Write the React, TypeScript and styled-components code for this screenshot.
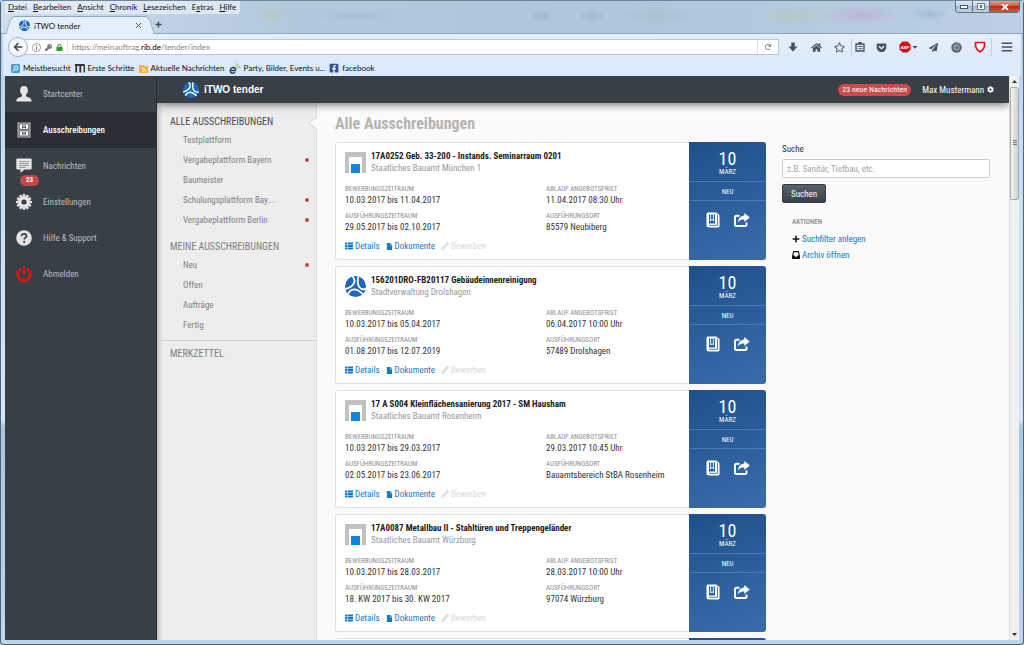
import React from 'react';
import styled, { createGlobalStyle, css } from 'styled-components';
import {
  FaArrowLeft, FaHome, FaRegStar, FaPaperPlane, FaGetPocket, FaBars, FaLock,
  FaCog, FaPlus, FaFile, FaPencilAlt, FaThList, FaCaretDown, FaFacebookSquare, FaRedo, FaKey,
} from 'react-icons/fa';

const condensed = '"Roboto Condensed", Roboto, sans-serif';
const chromeFont = 'Lato, "Open Sans", sans-serif';

const GlobalStyle = createGlobalStyle`
  * { box-sizing: border-box; }
  body { margin: 0; background: #b9d3ee; font-family: ${condensed}; font-size: 9px; color: #333; }
  a { color: inherit; text-decoration: none; }
  ul, ol, dl, dd, h1, h2, h3, p { margin: 0; padding: 0; }
  ul { list-style: none; }
  button, input { font: inherit; }
  svg { display: block; flex: none; }
`;

/* ---------- browser window ---------- */

const Window = styled.div`
  display: flex;
  flex-direction: column;
  height: 100vh;
  padding: 0 4px 4px;
  border: 1px solid #4d6478;
  border-top-color: #6d8797;
  border-radius: 4px;
  background: linear-gradient(#aec4da, #c4dcf4 120px, #d4e6f8 420px, #a9c6e2 425px, #bcd6f0);
`;

const TitleBar = styled.header`
  position: relative;
  display: flex;
  flex-direction: column;
  justify-content: space-between;
  flex: none;
  height: 33px;
  margin: 0 -4px;
  padding-left: 4px;
  background:
    radial-gradient(ellipse 14px 7px at 540px 15px, #8fa8c188, transparent),
    radial-gradient(ellipse 14px 8px at 271px 14px, #b9c48f66, transparent),
    radial-gradient(ellipse 40px 5px at 355px 15px, #96aec877, transparent),
    radial-gradient(ellipse 14px 7px at 591px 15px, #8fa8c177, transparent),
    radial-gradient(ellipse 40px 10px at 655px 15px, #9dbcc677, transparent),
    radial-gradient(ellipse 40px 10px at 795px 15px, #b8c8a877, transparent),
    radial-gradient(ellipse 40px 10px at 860px 14px, #c49ac477, transparent),
    radial-gradient(ellipse 20px 7px at 928px 13px, #8ba4c877, transparent),
    linear-gradient(90deg, #cfdeec, #b3c8dc 300px, #b0c6dc 60%, #bccfe4);
  border-bottom: 1px solid #8ea6bf;
`;

const MenuBar = styled.nav`
  display: flex;
  gap: 6px;
  align-self: flex-start;
  height: 13px;
  padding: 0 4px 0 3px;
  border-radius: 0 0 3px 0;
  background: #e6eef6cc;
  font: 8px/12px ${chromeFont};
  color: #111;
`;

const TabStrip = styled.div`
  position: relative;
  z-index: 0;
  display: flex;
  align-items: center;
  gap: 8px;
`;

const Tab = styled.div`
  position: relative;
  display: flex;
  align-items: center;
  gap: 4px;
  width: 134px;
  height: 18px;
  margin: 0 0 -1px 8px;
  padding: 0 6px;
  border-top: 1px solid #8ea6bf;
  background: #e3effb;
  font: 8px/16px ${chromeFont};
  color: #111;
  &::before, &::after {
    content: '';
    position: absolute;
    z-index: -1;
    top: -1px;
    bottom: 0;
    width: 12px;
    background: #e3effb;
    border: 1px solid #8ea6bf;
    border-bottom: 0;
  }
  &::before { left: -5px; border-right: 0; border-radius: 6px 0 0 0; transform: skewX(-16deg); }
  &::after { right: -5px; border-left: 0; border-radius: 0 6px 0 0; transform: skewX(16deg); }
`;

const PlainButton = styled.button`
  display: flex;
  align-items: center;
  justify-content: center;
  padding: 0;
  border: 0;
  background: none;
  color: #3c4650;
`;

const TabTitle = styled.span`
  flex: 1;
`;

const WindowButtons = styled.div`
  position: absolute;
  top: 0;
  right: 3px;
  display: flex;
  border: 1px solid #5d7084;
  border-top: 0;
  border-radius: 0 0 4px 4px;
  overflow: hidden;
`;

const WindowButton = styled.button<{ $close?: boolean }>`
  display: flex;
  align-items: center;
  justify-content: center;
  width: ${p => (p.$close ? 29 : 17)}px;
  height: 11px;
  padding: 0;
  border: 0;
  border-right: ${p => (p.$close ? 0 : 1)}px solid #5d7084;
  background: ${p => (p.$close
    ? 'linear-gradient(#e0a193, #cf5a42 45%, #b92d12 50%, #d0573a)'
    : 'linear-gradient(#dfe9f3, #c3d2e2 45%, #a5b9cd 50%, #c0d2e4)')};
`;

const NavBar = styled.div`
  display: flex;
  align-items: center;
  flex: none;
  height: 26px;
  margin: 0 -2px;
  padding-left: 5px;
  background: linear-gradient(#e5f0fc, #dce9f8);
`;

const BackButton = styled(PlainButton)`
  position: relative;
  z-index: 1;
  flex: none;
  width: 20px;
  height: 20px;
  margin-right: -6px;
  border: 1px solid #9fb0c2;
  border-radius: 50%;
  background: #f4f8fc;
`;

const AddressBar = styled.div`
  display: flex;
  align-items: center;
  gap: 4px;
  flex: 1;
  height: 16px;
  padding-left: 9px;
  border: 1px solid #b9c8d8;
  background: #fff;
  color: #777;
`;

const Address = styled.span`
  flex: 1;
  padding-left: 4px;
  border-left: 1px solid #e4e4e4;
  font: 8px/12px ${chromeFont};
  color: #858585;
  b { font-weight: 400; color: #000; }
`;

const Reload = styled(PlainButton)`
  width: 21px;
  height: 14px;
  border-left: 1px solid #dde4ea;
  color: #777;
`;

const ToolButton = styled(PlainButton)<{ $w?: number; $line?: boolean }>`
  flex: none;
  width: ${p => p.$w ?? 23}px;
  height: 18px;
  border-left: ${p => (p.$line ? '1px solid #c3d0dd' : 0)};
  color: #46525e;
`;

const Bookmarks = styled.nav`
  display: flex;
  align-items: center;
  gap: 4px;
  flex: none;
  height: 16px;
  margin: 0 -2px;
  padding-left: 8px;
  background: #dbe9f8;
  font: 8px/14px ${chromeFont};
  color: #111;
`;

const Bookmark = styled.a`
  display: flex;
  align-items: center;
  gap: 3px;
`;

/* ---------- web page ---------- */

const Viewport = styled.div`
  display: flex;
  flex: 1;
  min-height: 0;
  background: #fafafa;
  overflow: hidden;
`;

const Sidebar = styled.nav`
  flex: none;
  width: 152px;
  background: #383f46;
  box-shadow: inset -1px 0 #262c32;
`;

const SideLink = styled.a<{ $active?: boolean }>`
  position: relative;
  display: flex;
  align-items: center;
  gap: 11px;
  height: 36px;
  padding-left: 11px;
  font-size: 9px;
  color: #b9bdc0;
  ${p => p.$active && css`
    background: #2b3038;
    color: #fff;
    font-weight: 500;
  `}
`;

const Count = styled.span`
  position: absolute;
  z-index: 1;
  left: 15px;
  top: 27px;
  width: 19px;
  height: 11px;
  border-radius: 6px;
  background: #c2464a;
  color: #fff;
  font-size: 7px;
  font-weight: 700;
  line-height: 11px;
  text-align: center;
`;

const Main = styled.div`
  display: flex;
  flex-direction: column;
  flex: 1;
  min-width: 0;
`;

const AppBar = styled.header`
  position: relative;
  z-index: 1;
  display: flex;
  align-items: center;
  flex: none;
  height: 27px;
  padding: 0 15px 0 26px;
  background: #383f46;
  color: #fff;
  box-shadow: 0 1px 10px rgba(0, 0, 0, 0.6);
  clip-path: inset(0 0 -16px 0);
`;

const Brand = styled.a`
  display: flex;
  align-items: center;
  gap: 5px;
  flex: 1;
  font: 700 10px/16px "Liberation Sans", sans-serif;
`;

const Pill = styled.a`
  margin-right: 11px;
  padding: 0 4px;
  border-radius: 6px;
  background: #c84b4e;
  font-size: 8px;
  line-height: 12px;
`;

const UserButton = styled(PlainButton)`
  gap: 3px;
  color: #fff;
`;

const Columns = styled.div`
  display: flex;
  flex: 1;
  min-height: 0;
`;

const SubNav = styled.nav`
  flex: none;
  width: 160px;
  padding-top: 11px;
  border-right: 1px solid #dcdcdc;
  background: linear-gradient(90deg, #c4c4c4, #ededed 6px);
  color: #808080;
`;

const SubHeading = styled.h2<{ $active?: boolean }>`
  position: relative;
  padding-left: 13px;
  font-size: 10px;
  font-weight: 400;
  line-height: 16px;
  color: ${p => (p.$active ? '#4a4a4a' : '#808080')};
`;

const Notch = styled.svg`
  position: absolute;
  right: -1px;
  top: 2px;
`;

const SubList = styled.ul`
  margin-bottom: 9px;
`;

const SubItem = styled.li`
  display: flex;
  align-items: center;
  justify-content: space-between;
  height: 20px;
  padding: 0 7px 0 26px;
`;

const Dot = styled.i`
  width: 4px;
  height: 4px;
  border-radius: 50%;
  background: #c0484a;
`;

const SubFooter = styled.div`
  margin: -4px 0 0 4px;
  padding-top: 5px;
  border-top: 1px solid #d2d2d2;
  ${SubHeading} { padding-left: 9px; }
`;

const Content = styled.main`
  display: grid;
  grid-template-columns: minmax(0, 431fr) minmax(0, 208fr);
  gap: 16px;
  flex: 1;
  align-content: start;
  padding: 12px 19px 0 18px;
  overflow: hidden;
`;

const PageTitle = styled.h1`
  margin-bottom: 9px;
  font-size: 16px;
  line-height: 18px;
  font-weight: 700;
  color: #b4b4b4;
`;

const Card = styled.article`
  display: flex;
  height: 118px;
  margin-bottom: 6px;
  border: 1px solid #e0e0e0;
  border-right: 0;
  border-radius: 3px;
  background: #fff;
`;

const CardBody = styled.div`
  flex: 1;
  min-width: 0;
  padding: 8px 9px 0;
`;

const CardHead = styled.div`
  display: flex;
  align-items: center;
  gap: 5px;
  height: 23px;
  margin-bottom: 11px;
`;

const CardTitle = styled.h3`
  font-size: 9px;
  line-height: 12px;
  font-weight: 700;
  color: #222;
`;

const Office = styled.p`
  line-height: 13px;
  color: #999;
`;

const Facts = styled.dl`
  display: grid;
  grid-template-columns: 3fr 2fr;
  row-gap: 6px;
  dt { font-size: 7px; line-height: 9px; color: #8f8f8f; text-transform: uppercase; white-space: nowrap; }
  dd { line-height: 12px; color: #333; white-space: nowrap; }
`;

const CardLinks = styled.div`
  display: flex;
  gap: 6px;
  margin-top: 7px;
`;

const CardLink = styled.a<{ $off?: boolean }>`
  display: flex;
  align-items: center;
  gap: 2px;
  line-height: 12px;
  color: ${p => (p.$off ? '#d9d9d9' : '#1279c8')};
`;

const DatePanel = styled.aside`
  flex: none;
  width: 77px;
  margin: -1px 0;
  border-radius: 0 3px 3px 0;
  background: linear-gradient(160deg, #1f508c, #3a6cac);
  color: #fff;
  text-align: center;
`;

const DateBox = styled.div`
  height: 39px;
  padding-top: 8px;
  font-size: 7px;
  line-height: 8px;
`;

const Day = styled.div`
  font-size: 18px;
  line-height: 18px;
`;

const State = styled.div`
  height: 20px;
  border: solid #4c79b3;
  border-width: 1px 0;
  font-size: 7px;
  line-height: 20px;
`;

const PanelActions = styled.div`
  display: flex;
  justify-content: center;
  gap: 14px;
  padding-top: 11px;
`;

const Aside = styled.aside`
  padding-top: 28px;
`;

const SearchForm = styled.form`
  display: flex;
  flex-direction: column;
  align-items: flex-start;
  label { line-height: 12px; margin: 0 0 4px; }
`;

const SearchInput = styled.input`
  width: 100%;
  height: 19px;
  padding: 0 4px;
  border: 1px solid #ccc;
  border-radius: 2px;
  background: #fff;
  &::placeholder { color: #a5a5a5; opacity: 1; }
`;

const SearchButton = styled.button`
  height: 19px;
  margin-top: 6px;
  padding: 0 8px;
  border: 1px solid #32383e;
  border-radius: 2px;
  background: linear-gradient(#5a646d, #383f46);
  color: #fff;
`;

const Actions = styled.div`
  padding: 14px 0 0 10px;
`;

const ActionsTitle = styled.h2`
  margin-bottom: 4px;
  font-size: 7px;
  line-height: 10px;
  font-weight: 700;
  color: #999;
`;

const ActionLink = styled.a`
  display: flex;
  align-items: center;
  gap: 2px;
  height: 16px;
  color: #1279c8;
  svg { color: #111; }
`;

const ScrollTrack = styled.div`
  display: flex;
  flex-direction: column;
  flex: none;
  width: 10px;
  border-left: 1px solid #ddd;
  background: #f0f0f0;
`;

const ScrollArrow = styled.span<{ $down?: boolean }>`
  display: flex;
  align-items: center;
  justify-content: center;
  height: 11px;
  margin-top: ${p => (p.$down ? 'auto' : 0)};
  svg { transform: ${p => (p.$down ? 'rotate(180deg)' : 'none')}; }
`;

const ScrollThumb = styled.span`
  display: flex;
  align-items: center;
  justify-content: center;
  height: 20%;
  border: 1px solid #a9a9a9;
  border-radius: 2px;
  background: linear-gradient(90deg, #f5f5f5, #d0d0d4);
`;

/* ---------- drawings ---------- */

const RibLogo = ({ size }: { size: number }) => (
  <svg width={size} height={size} viewBox="0 0 24 24" aria-hidden="true">
    <circle cx="12" cy="12" r="12" fill="#1f68b8" />
    <g fill="none" stroke="#fff" strokeWidth="2">
      {[0, 120, 240].map(a => (
        <path key={a} d="M8.500 .3C13 5 11.500 11.500 .3 15" transform={`rotate(${a} 12 12)`} />
      ))}
    </g>
  </svg>
);

const BauamtLogo = () => (
  <svg width="21" height="21" viewBox="0 0 21 21" aria-hidden="true">
    <path d="M0 0H21V21H17V5H4V21H0Z" fill="#c2c2c2" />
    <rect x="6" y="12" width="9" height="9" fill="#0f86dc" />
  </svg>
);

const BookIcon = () => (
  <svg width="14" height="16" viewBox="0 0 14 16" aria-hidden="true">
    <path d="M2 .5H10Q11.500 .5 11.500 2H12Q13.500 2 13.500 3.500V14Q13.500 15.500 12 15.500H3Q.5 15.500 .5 13V2Q.5 .5 2 .5Z" fill="#fff" />
    <path d="M3 2.200H9V11.500H3Z" fill="#2c5e9e" />
    <path d="M4.600 2.200H7.400V9L6 7.700L4.600 9Z" fill="#2c5e9e" stroke="#fff" strokeWidth=".9" />
    <path d="M11.500 3V13.300H3" fill="none" stroke="#2c5e9e" strokeWidth=".8" />
  </svg>
);

const ShareIcon = () => (
  <svg width="16" height="14" viewBox="0 0 16 14" aria-hidden="true">
    <path d="M5.500 2.700H2.500Q1 2.700 1 4.200V11.500Q1 13 2.500 13H11Q12.500 13 12.500 11.500V9.500" fill="none" stroke="#fff" strokeWidth="2" />
    <path d="M10.300 0L15.800 4.600L10.300 9V6.500C7.500 6.300 5.500 7 3.800 9.500C4.200 5.500 6.500 2.900 10.300 2.600Z" fill="#fff" />
  </svg>
);

const TrayIcon = () => (
  <svg width="8" height="8" viewBox="0 0 8 8" aria-hidden="true">
    <path fillRule="evenodd" fill="#111" d="M1.200 0H6.800L8 5V8H0V5ZM1.900 1.200L1.300 4.600H2.600L3.200 5.800H4.800L5.400 4.600H6.700L6.100 1.200Z" />
  </svg>
);

const SideSvg = ({ children }: { children: React.ReactNode }) => (
  <svg width="16" height="16" viewBox="0 0 16 16" fill="#e4e4e4" aria-hidden="true">{children}</svg>
);

const PersonIcon = () => (
  <SideSvg>
    <path d="M8 0C10.500 0 11.900 1.600 11.900 4.200C11.900 6.300 11.200 7.600 10.100 8.600V10.500C12.500 11.400 15.700 12 15.700 15.500H.3C.3 12 3.500 11.400 5.900 10.500V8.600C4.800 7.600 4.100 6.300 4.100 4.200C4.100 1.600 5.500 0 8 0Z" />
  </SideSvg>
);

const CabinetIcon = () => (
  <SideSvg>
    <path d="M1.500 .5H14.500V15.500H1.500Z" fill="#b8b8b8" />
    <path d="M3.200 2H12.800V7.200H3.200ZM3.200 8.800H12.800V14H3.200Z" fill="#fff" stroke="#3a3f47" strokeWidth=".8" />
    <path d="M6 3.500H10V5.800H6ZM6 10.300H10V12.600H6Z" fill="#3a3f47" />
    <path d="M7.200 4H8.800V4.900H7.200ZM7.200 10.800H8.800V11.700H7.200Z" fill="#fff" />
  </SideSvg>
);

const MessageIcon = () => (
  <SideSvg>
    <path d="M1.500 .5H14.500Q15.700 .5 15.700 1.700V10.200Q15.700 11.400 14.500 11.400H8.500L4.500 15V11.400H1.500Q.3 11.400 .3 10.200V1.700Q.3 .5 1.500 .5Z" />
    <path d="M3 3.500H13M3 5.500H13M3 7.500H13M3 9.500H10" stroke="#8d9094" strokeWidth=".9" />
  </SideSvg>
);

const GearIcon = () => (
  <SideSvg>
    {[0, 30, 60, 90, 120, 150].map(a => (
      <rect key={a} x="6.700" y="0" width="2.600" height="16" rx=".8" transform={`rotate(${a} 8 8)`} />
    ))}
    <circle cx="8" cy="8" r="6" />
    <circle cx="8" cy="8" r="2.600" fill="#383f46" />
  </SideSvg>
);

const HelpIcon = () => (
  <SideSvg>
    <circle cx="8" cy="8" r="7.800" />
    <path d="M5.600 6.200C5.600 4.500 6.600 3.800 8 3.800C9.500 3.800 10.500 4.600 10.500 5.900C10.500 7.600 8.200 7.700 8.200 9.600" fill="none" stroke="#383f46" strokeWidth="1.700" />
    <circle cx="8.200" cy="11.900" r="1.100" fill="#383f46" />
  </SideSvg>
);

const PowerIcon = () => (
  <SideSvg>
    <path d="M4 3.600A6.300 6.300 0 1 0 12 3.600" fill="none" stroke="#cf1717" strokeWidth="2.900" strokeLinecap="round" />
    <path d="M8 1.400V7.500" stroke="#cf1717" strokeWidth="2.700" strokeLinecap="round" />
  </SideSvg>
);

/* ---------- data ---------- */

const menus: [string, string, string][] = [
  ['', 'D', 'atei'], ['', 'B', 'earbeiten'], ['', 'A', 'nsicht'], ['', 'C', 'hronik'],
  ['', 'L', 'esezeichen'], ['E', 'x', 'tras'], ['', 'H', 'ilfe'],
];

const sideLinks = [
  { label: 'Startcenter', icon: <PersonIcon /> },
  { label: 'Ausschreibungen', icon: <CabinetIcon />, active: true },
  { label: 'Nachrichten', icon: <MessageIcon />, count: 23 },
  { label: 'Einstellungen', icon: <GearIcon /> },
  { label: 'Hilfe & Support', icon: <HelpIcon /> },
  { label: 'Abmelden', icon: <PowerIcon /> },
];

const platforms: [string, boolean][] = [
  ['Testplattform', false], ['Vergabeplattform Bayern', true], ['Baumeister', false],
  ['Schulungsplattform Bay...', true], ['Vergabeplattform Berlin', true],
];
const own: [string, boolean][] = [['Neu', true], ['Offen', false], ['Aufträge', false], ['Fertig', false]];

const tenders = [
  { title: '17A0252 Geb. 33-200 - Instands. Seminarraum 0201', office: 'Staatliches Bauamt München 1', apply: '10.03.2017 bis 11.04.2017', due: '11.04.2017 08:30 Uhr', run: '29.05.2017 bis 02.10.2017', place: '85579 Neubiberg' },
  { title: '156201DRO-FB20117 Gebäudeinnenreinigung', office: 'Stadtverwaltung Drolshagen', apply: '10.03.2017 bis 05.04.2017', due: '06.04.2017 10:00 Uhr', run: '01.08.2017 bis 12.07.2019', place: '57489 Drolshagen', rib: true },
  { title: '17 A S004 Kleinflächensanierung 2017 - SM Hausham', office: 'Staatliches Bauamt Rosenheim', apply: '10.03.2017 bis 29.03.2017', due: '29.03.2017 10:45 Uhr', run: '02.05.2017 bis 23.06.2017', place: 'Bauamtsbereich StBA Rosenheim' },
  { title: '17A0087 Metallbau II - Stahltüren und Treppengeländer', office: 'Staatliches Bauamt Würzburg', apply: '10.03.2017 bis 28.03.2017', due: '28.03.2017 10:00 Uhr', run: '18. KW 2017 bis 30. KW 2017', place: '97074 Würzburg' },
];

const SubLinks = ({ items }: { items: [string, boolean][] }) => (
  <SubList>
    {items.map(([label, dot]) => (
      <SubItem key={label}><a href="#">{label}</a>{dot && <Dot />}</SubItem>
    ))}
  </SubList>
);

const TenderCard = ({ t }: { t: (typeof tenders)[number] }) => (
  <Card>
    <CardBody>
      <CardHead>
        {t.rib ? <RibLogo size={21} /> : <BauamtLogo />}
        <div>
          <CardTitle>{t.title}</CardTitle>
          <Office>{t.office}</Office>
        </div>
      </CardHead>
      <Facts>
        <div><dt>Bewerbungszeitraum</dt><dd>{t.apply}</dd></div>
        <div><dt>Ablauf Angebotsfrist</dt><dd>{t.due}</dd></div>
        <div><dt>Ausführungszeitraum</dt><dd>{t.run}</dd></div>
        <div><dt>Ausführungsort</dt><dd>{t.place}</dd></div>
      </Facts>
      <CardLinks>
        <CardLink href="#"><FaThList size={8} />Details</CardLink>
        <CardLink href="#"><FaFile size={7} />Dokumente</CardLink>
        <CardLink $off aria-disabled="true"><FaPencilAlt size={8} />Bewerben</CardLink>
      </CardLinks>
    </CardBody>
    <DatePanel>
      <DateBox><Day>10</Day>MÄRZ</DateBox>
      <State>NEU</State>
      <PanelActions>
        <PlainButton aria-label="Merken"><BookIcon /></PlainButton>
        <PlainButton aria-label="Teilen"><ShareIcon /></PlainButton>
      </PanelActions>
    </DatePanel>
  </Card>
);

export default function App() {
  return (
    <Window>
      <GlobalStyle />
      <TitleBar>
        <MenuBar>
          {menus.map(([pre, key, rest]) => <a href="#" key={rest}>{pre}<u>{key}</u>{rest}</a>)}
        </MenuBar>
        <TabStrip>
          <Tab>
            <RibLogo size={11} />
            <TabTitle>iTWO tender</TabTitle>
            <PlainButton aria-label="Tab schließen">
              <svg width="5" height="5" viewBox="0 0 5 5"><path d="M0 0L5 5M5 0L0 5" stroke="#555" /></svg>
            </PlainButton>
          </Tab>
          <PlainButton aria-label="Neuer Tab"><FaPlus size={7} /></PlainButton>
        </TabStrip>
        <WindowButtons>
          <WindowButton aria-label="Minimieren">
            <svg width="8" height="4" viewBox="0 0 8 4"><rect x=".5" y=".5" width="7" height="3" fill="#fff" stroke="#4b5a6a" /></svg>
          </WindowButton>
          <WindowButton aria-label="Maximieren">
            <svg width="8" height="7" viewBox="0 0 8 7"><path d="M.5 .5H7.500V6.500H.5ZM3 2.500V4.500H5V2.500Z" fill="#fff" fillRule="evenodd" stroke="#4b5a6a" strokeWidth=".8" /></svg>
          </WindowButton>
          <WindowButton $close aria-label="Schließen">
            <svg width="8" height="6" viewBox="0 0 8 6"><path d="M1 0L7 6M7 0L1 6" stroke="#fff" strokeWidth="1.800" /></svg>
          </WindowButton>
        </WindowButtons>
      </TitleBar>

      <NavBar>
        <BackButton aria-label="Zurück"><FaArrowLeft size={10} /></BackButton>
        <AddressBar>
          <svg width="9" height="9" viewBox="0 0 9 9"><circle cx="4.500" cy="4.500" r="4" fill="none" stroke="#888" strokeWidth=".8" /><path d="M4.500 2V3M4.500 4V7" stroke="#777" /></svg>
          <FaKey size={7} />
          <FaLock size={7} color="#2f9a27" />
          <Address>https://meinauftrag.<b>rib.de</b>/tender/index</Address>
          <Reload aria-label="Neu laden"><FaRedo size={6} /></Reload>
        </AddressBar>
        <ToolButton $w={27} aria-label="Downloads">
          <svg width="10" height="10" viewBox="0 0 10 10"><path d="M3.300 .5H6.700V4.500H9.500L5 9.500L.5 4.500H3.300Z" fill="#46525e" /></svg>
        </ToolButton>
        <ToolButton $w={21} aria-label="Startseite"><FaHome size={11} /></ToolButton>
        <ToolButton $w={24} aria-label="Lesezeichen"><FaRegStar size={11} /></ToolButton>
        <ToolButton $w={17} $line aria-label="Lesezeichenliste">
          <svg width="10" height="10" viewBox="0 0 10 10"><path d="M1 2H9V9H1Z" fill="none" stroke="#46525e" strokeWidth="1.300" /><path d="M3.500 0H6.500V2.500H3.500ZM2.500 4H3.500V5H2.500ZM4.200 4H7.700V5H4.200ZM2.500 6.200H3.500V7.200H2.500ZM4.200 6.200H7.700V7.200H4.200Z" fill="#46525e" /></svg>
        </ToolButton>
        <ToolButton $w={27} aria-label="Pocket"><FaGetPocket size={11} /></ToolButton>
        <ToolButton $w={27} aria-label="Adblock Plus">
          <svg width="12" height="12" viewBox="0 0 12 12"><path d="M3.500 .5H8.500L11.500 3.500V8.500L8.500 11.500H3.500L.5 8.500V3.500Z" fill="#d4111b" /><text x="6" y="7.500" fontSize="4" fontWeight="700" textAnchor="middle" fill="#fff" fontFamily="Liberation Sans, sans-serif">ABP</text></svg>
          <FaCaretDown size={8} />
        </ToolButton>
        <ToolButton aria-label="Senden"><FaPaperPlane size={9} /></ToolButton>
        <ToolButton aria-label="Erweiterung">
          <svg width="11" height="11" viewBox="0 0 11 11"><circle cx="5.500" cy="5.500" r="5.200" fill="#5b6670" /><circle cx="5.500" cy="5.300" r="2.600" fill="none" stroke="#cfd6dc" strokeWidth=".8" /><path d="M5.500 5.300L3.500 3" stroke="#cfd6dc" strokeWidth=".8" /></svg>
        </ToolButton>
        <ToolButton aria-label="Schutz">
          <svg width="12" height="12" viewBox="0 0 12 12"><path d="M1.500 1.500H10.500V5.500L8.500 9L6 10.800L3.500 9L1.500 5.500Z" fill="#fff" stroke="#e2131f" strokeWidth="1.700" strokeLinejoin="round" /></svg>
        </ToolButton>
        <ToolButton $w={30} $line aria-label="Menü"><FaBars size={12} /></ToolButton>
      </NavBar>

      <Bookmarks>
        <Bookmark href="#">
          <svg width="9" height="9" viewBox="0 0 9 9"><rect width="9" height="9" rx="1.500" fill="#4f9cc4" /><circle cx="5" cy="4" r="2" fill="none" stroke="#fff" /><path d="M3.500 5.500L1.500 7.500" stroke="#fff" /></svg>
          Meistbesucht
        </Bookmark>
        <Bookmark href="#">
          <svg width="10" height="9" viewBox="0 0 10 9"><path d="M0 1H8.500Q9.500 1 9.500 2V8.500M1.200 1V8.500M5.300 1V8.500" fill="none" stroke="#333" strokeWidth="1.800" /></svg>
          Erste Schritte
        </Bookmark>
        <Bookmark href="#">
          <svg width="9" height="9" viewBox="0 0 9 9"><path d="M0 1H4L5 2H9V9H0Z" fill="#f2b73a" /><path d="M3 4A3.500 3.500 0 0 1 6.500 7.500M3 6A1.500 1.500 0 0 1 4.500 7.500" fill="none" stroke="#fff" strokeWidth=".9" /></svg>
          Aktuelle Nachrichten
        </Bookmark>
        <Bookmark href="#">
          <svg width="12" height="11" viewBox="0 0 12 11"><path d="M1.500 7.500H6.500C6.800 5.500 5.800 4.500 4.300 4.500C2.500 4.500 1.200 6 1.200 7.800C1.200 9.400 2.200 10.200 3.600 10.200C4.700 10.200 5.500 9.900 6.200 9.300" fill="none" stroke="#2b3f63" strokeWidth="1.400" /><path d="M6.500 1A4.500 4.500 0 0 1 11 5.500M6.500 3A2.500 2.500 0 0 1 9 5.500" fill="none" stroke="#8cc665" /></svg>
          Party, Bilder, Events u...
        </Bookmark>
        <Bookmark href="#"><FaFacebookSquare size={10} color="#34508f" />facebook</Bookmark>
      </Bookmarks>

      <Viewport>
        <Sidebar>
          {sideLinks.map(s => (
            <SideLink key={s.label} href="#" $active={s.active}>
              {s.icon}{s.label}{s.count && <Count>{s.count}</Count>}
            </SideLink>
          ))}
        </Sidebar>
        <Main>
          <AppBar>
            <Brand href="#"><RibLogo size={16} />iTWO tender</Brand>
            <Pill href="#">23 neue Nachrichten</Pill>
            <UserButton>Max Mustermann<FaCog size={7} /></UserButton>
          </AppBar>
          <Columns>
            <SubNav>
              <SubHeading $active>
                <a href="#">ALLE AUSSCHREIBUNGEN</a>
                <Notch width="9" height="14" viewBox="0 0 9 14"><path d="M9 .5L.8 7L9 13.500" fill="#fafafa" stroke="#d0d0d0" /></Notch>
              </SubHeading>
              <SubLinks items={platforms} />
              <SubHeading><a href="#">MEINE AUSSCHREIBUNGEN</a></SubHeading>
              <SubLinks items={own} />
              <SubFooter><SubHeading><a href="#">MERKZETTEL</a></SubHeading></SubFooter>
            </SubNav>
            <Content>
              <section>
                <PageTitle>Alle Ausschreibungen</PageTitle>
                {tenders.map(t => <TenderCard key={t.title} t={t} />)}
                <Card><CardBody /><DatePanel /></Card>
              </section>
              <Aside>
                <SearchForm>
                  <label htmlFor="q">Suche</label>
                  <SearchInput id="q" placeholder="z.B. Sanitär, Tiefbau, etc." />
                  <SearchButton type="button">Suchen</SearchButton>
                </SearchForm>
                <Actions>
                  <ActionsTitle>AKTIONEN</ActionsTitle>
                  <ActionLink href="#"><FaPlus size={8} />Suchfilter anlegen</ActionLink>
                  <ActionLink href="#"><TrayIcon />Archiv öffnen</ActionLink>
                </Actions>
              </Aside>
            </Content>
          </Columns>
        </Main>
        <ScrollTrack>
          <ScrollArrow><svg width="5" height="3" viewBox="0 0 5 3"><path d="M0 3L2.500 0L5 3Z" fill="#333" /></svg></ScrollArrow>
          <ScrollThumb><svg width="4" height="6" viewBox="0 0 4 6"><path d="M0 .5H4M0 2.500H4M0 4.500H4" stroke="#777" /></svg></ScrollThumb>
          <ScrollArrow $down><svg width="5" height="3" viewBox="0 0 5 3"><path d="M0 3L2.500 0L5 3Z" fill="#333" /></svg></ScrollArrow>
        </ScrollTrack>
      </Viewport>
    </Window>
  );
}
